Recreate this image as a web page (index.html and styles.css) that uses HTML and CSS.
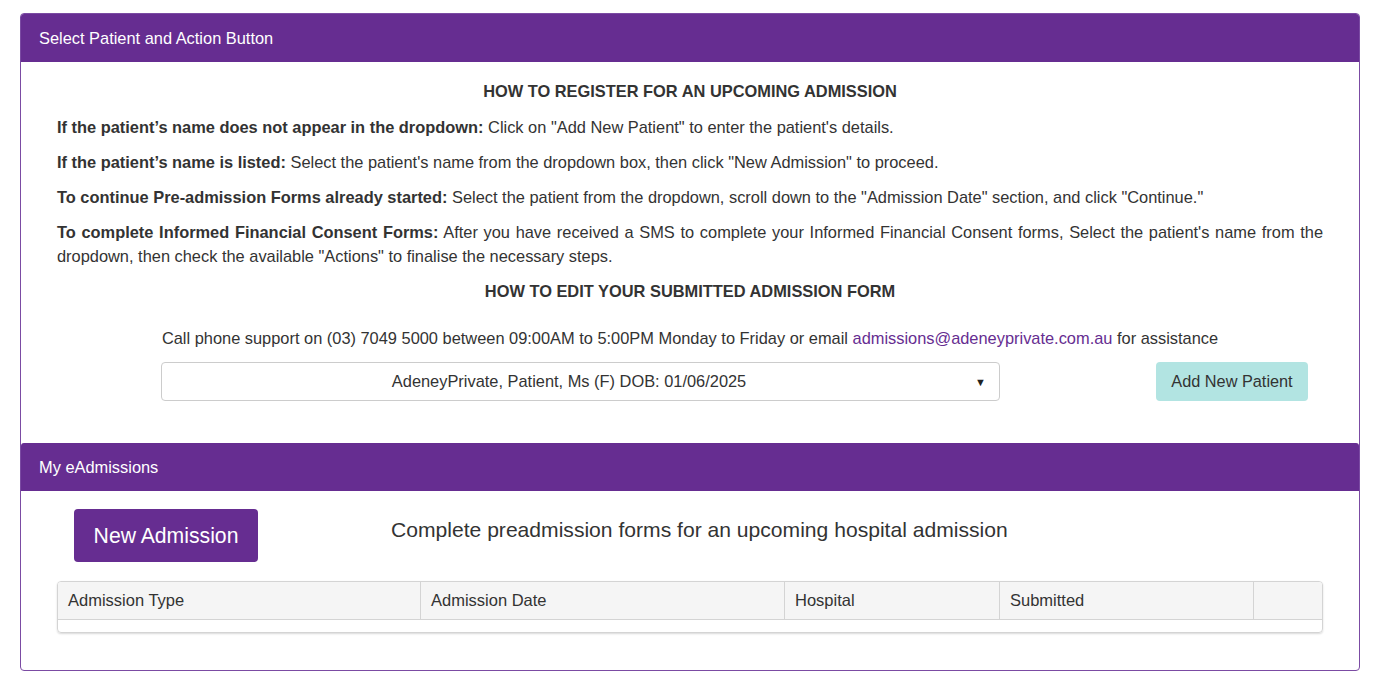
FILE: index.html
```html
<!DOCTYPE html>
<html lang="en">
<head>
    <meta charset="UTF-8">
    <meta name="viewport" content="width=device-width, initial-scale=1.0">
    <title>eAdmissions</title>
    <link rel="stylesheet" href="styles.css">
</head>
<body>
    <div class="card">
        <div class="card-header">Select Patient and Action Button</div>
        <div class="card-body">
            <h4 class="info-title">HOW TO REGISTER FOR AN UPCOMING ADMISSION</h4>
            <p class="info"><b>If the patient’s name does not appear in the dropdown:</b> Click on "Add New Patient" to enter the patient's details.</p>
            <p class="info"><b>If the patient’s name is listed:</b> Select the patient's name from the dropdown box, then click "New Admission" to proceed.</p>
            <p class="info"><b>To continue Pre-admission Forms already started:</b> Select the patient from the dropdown, scroll down to the "Admission Date" section, and click "Continue."</p>
            <p class="info"><b>To complete Informed Financial Consent Forms:</b> After you have received a SMS to complete your Informed Financial Consent forms, Select the patient's name from the dropdown, then check the available "Actions" to finalise the necessary steps.</p>
            <h4 class="info-title">HOW TO EDIT YOUR SUBMITTED ADMISSION FORM</h4>
            <p class="support">Call phone support on (03) 7049 5000 between 09:00AM to 5:00PM Monday to Friday or email <a href="#">admissions@adeneyprivate.com.au</a> for assistance</p>
            <div class="patient-row">
                <div class="patient-select">
                    <span class="patient-name">AdeneyPrivate, Patient, Ms (F) DOB: 01/06/2025</span>
                    <span class="caret">&#9660;</span>
                </div>
                <button class="btn-add">Add New Patient</button>
            </div>
        </div>

        <div class="card-header second">My eAdmissions</div>
        <div class="card-body admissions">
            <div class="new-row">
                <button class="btn-new">New Admission</button>
                <span class="new-text">Complete preadmission forms for an upcoming hospital admission</span>
            </div>
            <table class="adm-table">
                <thead>
                    <tr>
                        <th class="c-type">Admission Type</th>
                        <th class="c-date">Admission Date</th>
                        <th class="c-hosp">Hospital</th>
                        <th class="c-sub">Submitted</th>
                        <th class="c-act"></th>
                    </tr>
                </thead>
                <tbody>
                    <tr><td colspan="5"></td></tr>
                </tbody>
            </table>
        </div>
    </div>
</body>
</html>
```

FILE: styles.css
```css
body {
    margin: 0;
    font-family: "Liberation Sans", Arial, sans-serif;
    color: #333;
    background: #fff;
}
.card {
    margin: 13px 24px 0 20px;
    border: 1px solid #7b4ba3;
    border-radius: 4px;
    overflow: hidden;
}
.card-header {
    height: 48px;
    display: flex;
    align-items: center;
    padding: 0 18px;
    background-color: #662d91;
    color: #fff;
    font-size: 16.4px;
}
.card-header.second {
    border-radius: 3px 3px 0 0;
}
.card-body {
    padding: 17px 36px 42px 36px;
}
.info-title {
    margin: 0;
    text-align: center;
    font-size: 16.4px;
    line-height: 24px;
    font-weight: bold;
}
.info {
    margin: 11px 0 0 0;
    font-size: 16.4px;
    line-height: 24px;
    text-align: justify;
}
.info:first-of-type {
    margin-top: 12px;
}
.info + .info-title {
    margin-top: 11px;
}
.support {
    margin: 23px 0 0 0;
    text-align: center;
    font-size: 16.4px;
    line-height: 24px;
}
.support a {
    color: #662d91;
    text-decoration: none;
}
.patient-row {
    display: flex;
    align-items: center;
    margin-top: 12px;
    padding-left: 104px;
}
.patient-select {
    width: 839px;
    height: 39px;
    box-sizing: border-box;
    border: 1px solid #ccc;
    border-radius: 4px;
    display: flex;
    align-items: center;
    font-size: 16.4px;
}
.patient-name {
    flex: 1;
    text-align: center;
    padding-left: 22px;
    margin-right: 21px;
}
.caret {
    font-size: 11px;
    margin-right: 13px;
    color: #222;
}
.btn-add {
    margin-left: 156px;
    width: 152px;
    height: 39px;
    border: none;
    border-radius: 4px;
    background-color: #b2e4e2;
    color: #333;
    font-family: inherit;
    font-size: 16.3px;
}
.admissions {
    padding-top: 18px;
    padding-bottom: 37px;
}
.new-row {
    display: flex;
    align-items: center;
}
.btn-new {
    margin-left: 17px;
    width: 184px;
    height: 53px;
    border: none;
    border-radius: 4px;
    background-color: #662d91;
    color: #fff;
    font-family: inherit;
    font-size: 21.2px;
}
.new-text {
    margin-left: 133px;
    margin-top: -11px;
    font-size: 21.1px;
}
.adm-table {
    width: 100%;
    margin-top: 19px;
    border-collapse: separate;
    border-spacing: 0;
    border: 1px solid #d4d4d4;
    border-radius: 4px;
    box-shadow: 0 1px 2px rgba(0, 0, 0, 0.15);
    overflow: hidden;
}
.adm-table th {
    height: 37px;
    padding: 0 10px;
    text-align: left;
    font-weight: normal;
    font-size: 16.5px;
    background-color: #f5f5f5;
    border-bottom: 1px solid #d4d4d4;
    border-right: 1px solid #d4d4d4;
}
.adm-table th:last-child {
    border-right: none;
}
.adm-table td {
    height: 12px;
    padding: 0;
}
.c-type { width: 342px; }
.c-date { width: 343px; }
.c-hosp { width: 194px; }
.c-sub { width: 233px; }
```
